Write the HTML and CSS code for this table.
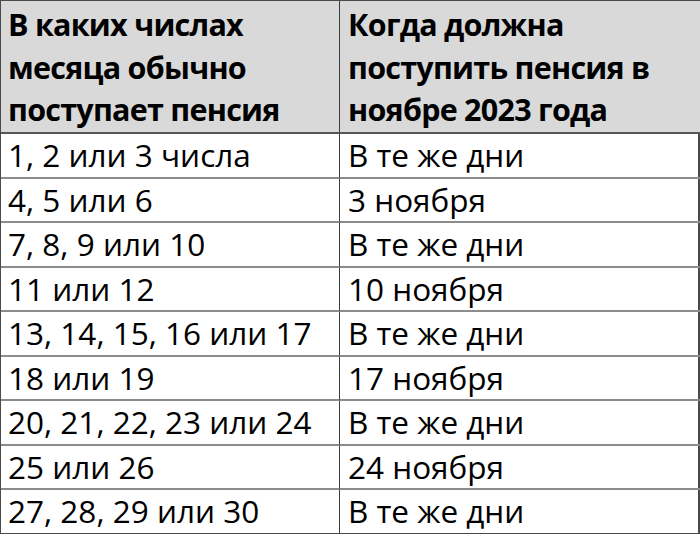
FILE: index.html
```html
<!DOCTYPE html>
<html lang="ru">
<head>
<meta charset="utf-8">
<link rel="stylesheet" href="styles.css">
</head>
<body>
<div class="grid">
  <div class="cell head left">В каких числах месяца обычно поступает пенсия</div>
  <div class="cell head right">Когда должна поступить пенсия в ноябре 2023 года</div>
  <div class="cell left">1, 2 или 3 числа</div><div class="cell right">В те же дни</div>
  <div class="cell left">4, 5 или 6</div><div class="cell right">3 ноября</div>
  <div class="cell left">7, 8, 9 или 10</div><div class="cell right">В те же дни</div>
  <div class="cell left">11 или 12</div><div class="cell right">10 ноября</div>
  <div class="cell left">13, 14, 15, 16 или 17</div><div class="cell right">В те же дни</div>
  <div class="cell left">18 или 19</div><div class="cell right">17 ноября</div>
  <div class="cell left">20, 21, 22, 23 или 24</div><div class="cell right">В те же дни</div>
  <div class="cell left">25 или 26</div><div class="cell right">24 ноября</div>
  <div class="cell left last">27, 28, 29 или 30</div><div class="cell right last">В те же дни</div>
</div>
</body>
</html>
```
FILE: styles.css
```css
html, body {
  margin: 0;
  padding: 0;
  background: #ffffff;
}
.grid {
  width: 700px;
  height: 534px;
  box-sizing: border-box;
  display: grid;
  grid-template-columns: 339px 361px;
  grid-template-rows: 133px repeat(9, 1fr);
  border-top: 1px solid #4a4a4a;
  border-left: 1px solid #4a4a4a;
  border-right: 2px solid #4a4a4a;
  border-bottom: 1px solid #4a4a4a;
  font-family: "Open Sans", "Noto Sans", sans-serif;
  font-size: 31.5px;
  color: #000;
}
.cell {
  box-sizing: border-box;
  padding: 0 6px 0 7px;
  display: flex;
  align-items: center;
  border-bottom: 2px solid #8c8c8c;
  line-height: 42.5px;
  white-space: nowrap;
}
.left {
  border-right: 1px solid #3c3c3c;
}
.right {
  padding-left: 8px;
}
.head {
  background: #d9d9d9;
  font-weight: 700;
  font-size: 30.5px;
  align-items: flex-start;
  padding-top: 2px;
  border-bottom: 2px solid #555555;
  letter-spacing: -0.75px;
  white-space: normal;
}
.last {
  border-bottom: none;
}
```
